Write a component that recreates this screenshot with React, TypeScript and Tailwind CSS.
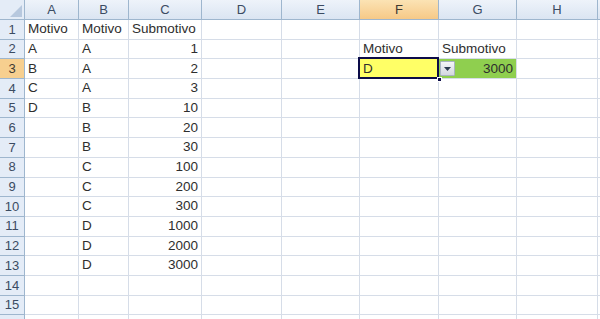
import React from 'react'

const COLS = [
  { name: 'A', w: 'w-[54px]' },
  { name: 'B', w: 'w-[50px]' },
  { name: 'C', w: 'w-[73px]' },
  { name: 'D', w: 'w-[80px]' },
  { name: 'E', w: 'w-[78px]' },
  { name: 'F', w: 'w-[79px]' },
  { name: 'G', w: 'w-[78px]' },
  { name: 'H', w: 'w-[81px]' },
  { name: '', w: 'w-[10px]' },
]

type Cell = { v: string; right?: boolean }

// row number -> cells by column letter
const DATA: Record<number, Record<string, Cell>> = {
  1: { A: { v: 'Motivo' }, B: { v: 'Motivo' }, C: { v: 'Submotivo' } },
  2: { A: { v: 'A' }, B: { v: 'A' }, C: { v: '1', right: true }, F: { v: 'Motivo' }, G: { v: 'Submotivo' } },
  3: { A: { v: 'B' }, B: { v: 'A' }, C: { v: '2', right: true }, F: { v: 'D' }, G: { v: '3000', right: true } },
  4: { A: { v: 'C' }, B: { v: 'A' }, C: { v: '3', right: true } },
  5: { A: { v: 'D' }, B: { v: 'B' }, C: { v: '10', right: true } },
  6: { B: { v: 'B' }, C: { v: '20', right: true } },
  7: { B: { v: 'B' }, C: { v: '30', right: true } },
  8: { B: { v: 'C' }, C: { v: '100', right: true } },
  9: { B: { v: 'C' }, C: { v: '200', right: true } },
  10: { B: { v: 'C' }, C: { v: '300', right: true } },
  11: { B: { v: 'D' }, C: { v: '1000', right: true } },
  12: { B: { v: 'D' }, C: { v: '2000', right: true } },
  13: { B: { v: 'D' }, C: { v: '3000', right: true } },
}

const ROWS = Array.from({ length: 16 }, (_, i) => i + 1)

function ColHeader({ name, w }: { name: string; w: string }) {
  const active = name === 'F'
  return (
    <div
      className={`${w} shrink-0 h-full flex items-center justify-center border-r border-b border-[#9eb6ce] text-[13px] ${
        active
          ? 'bg-gradient-to-b from-[#fbe3b4] to-[#f6c987] text-[#3e3a33]'
          : 'bg-gradient-to-b from-[#eef3fa] to-[#dbe5f2] text-[#3b4b62]'
      }`}
    >
      {name}
    </div>
  )
}

function RowHeader({ n }: { n: number }) {
  const active = n === 3
  return (
    <div
      className={`w-[25px] shrink-0 h-full flex items-center justify-center border-r border-b border-[#9eb6ce] text-[13px] ${
        active ? 'bg-[#f7cf8f] text-[#3e3a33]' : 'bg-[#e4ecf7] text-[#3b4b62]'
      }`}
    >
      {n <= 15 ? n : ''}
    </div>
  )
}

function DataCell({ row, col, w }: { row: number; col: string; w: string }) {
  const cell = DATA[row]?.[col]
  const isSel = row === 3 && col === 'F'
  const isList = row === 3 && col === 'G'
  let bg = 'bg-white'
  if (isSel) bg = 'bg-[#ffff66]'
  if (isList) bg = 'bg-[#8fcf4f]'
  return (
    <div
      className={`${w} shrink-0 h-full relative flex items-end pb-[1px] px-[3px] border-r border-b border-[#d6dde8] ${bg} ${
        cell?.right ? 'justify-end' : 'justify-start'
      } text-[13.5px] leading-none text-[#2e2e2e] whitespace-nowrap overflow-visible`}
    >
      {cell && <span className="relative z-10 pb-[2px]">{cell.v}</span>}
      {isSel && (
        <>
          <div className="absolute -left-[2px] -top-[2px] -right-[1px] -bottom-[1px] border-[2px] border-[#0c0c48] z-20 pointer-events-none" />
          <div className="absolute -right-[4px] -bottom-[4px] w-[5px] h-[5px] bg-[#0c0c48] border border-white z-30" />
        </>
      )}
      {isList && (
        <div className="absolute left-[1px] top-[2px] w-[15px] h-[15px] z-20 rounded-[1px] border border-[#a9b3c2] bg-gradient-to-b from-[#f4f5f8] to-[#d3d8e1] flex items-center justify-center">
          <svg width="7" height="4" viewBox="0 0 7 4">
            <path d="M0 0h7L3.5 4z" fill="#2c3a50" />
          </svg>
        </div>
      )}
    </div>
  )
}

export default function App() {
  return (
    <div className="w-[600px] h-[319px] overflow-hidden bg-white font-['Liberation_Sans',Arial,sans-serif]">
      <div className="flex h-[20px]">
        <div className="w-[25px] shrink-0 h-full relative border-r border-b border-[#9eb6ce] bg-[#e4ecf7]">
          <svg className="absolute right-[2px] bottom-[2px]" width="12" height="12" viewBox="0 0 12 12">
            <path d="M12 0V12H0z" fill="#b7c8de" />
          </svg>
        </div>
        {COLS.map((c, i) => (
          <ColHeader key={i} name={c.name} w={c.w} />
        ))}
      </div>
      {ROWS.map((r) => (
        <div key={r} className="flex h-[19.7px]">
          <RowHeader n={r} />
          {COLS.map((c, i) => (
            <DataCell key={i} row={r} col={c.name} w={c.w} />
          ))}
        </div>
      ))}
    </div>
  )
}
